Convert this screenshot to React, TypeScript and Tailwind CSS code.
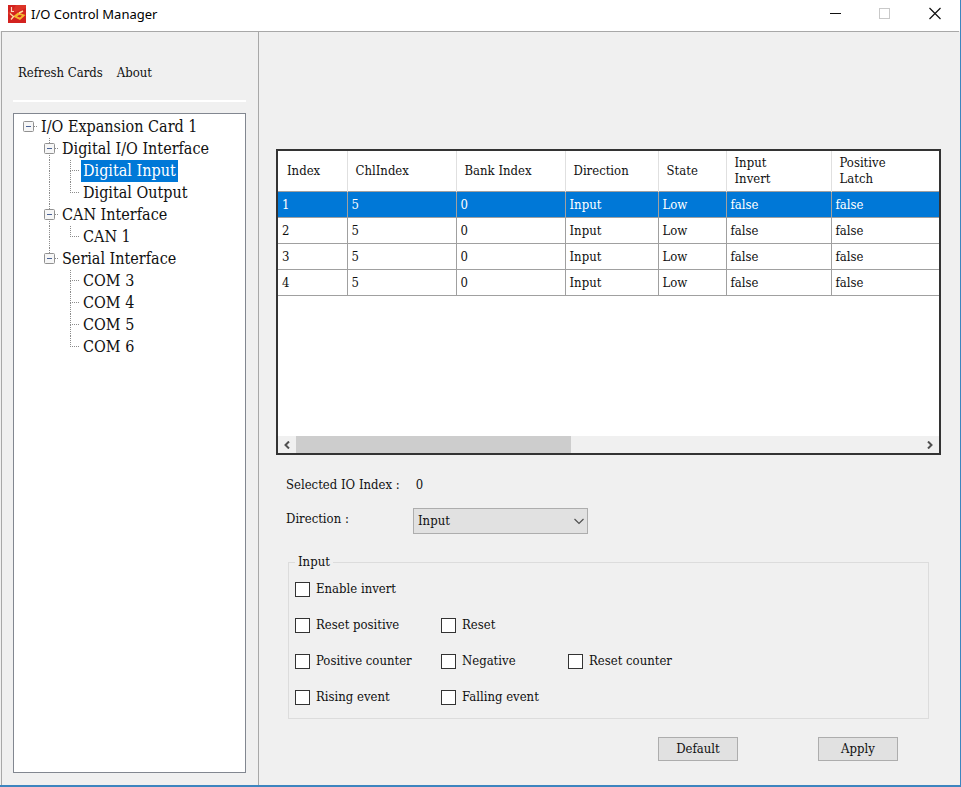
import React, { useState } from 'react';

type Guide = 'none' | 'line' | 'tee' | 'corner' | 'root' | 'node' | 'lastNode';

interface TreeItem {
    label: string;
    guides: Guide[];
}

const treeItems: TreeItem[] = [
    { label: 'I/O Expansion Card 1', guides: ['root'] },
    { label: 'Digital I/O Interface', guides: ['none', 'node'] },
    { label: 'Digital Input', guides: ['none', 'line', 'tee'] },
    { label: 'Digital Output', guides: ['none', 'line', 'corner'] },
    { label: 'CAN Interface', guides: ['none', 'node'] },
    { label: 'CAN 1', guides: ['none', 'line', 'corner'] },
    { label: 'Serial Interface', guides: ['none', 'lastNode'] },
    { label: 'COM 3', guides: ['none', 'none', 'tee'] },
    { label: 'COM 4', guides: ['none', 'none', 'tee'] },
    { label: 'COM 5', guides: ['none', 'none', 'tee'] },
    { label: 'COM 6', guides: ['none', 'none', 'corner'] },
];

const columns = [
    { title: 'Index', width: 'w-[69px]' },
    { title: 'ChlIndex', width: 'w-[109px]' },
    { title: 'Bank Index', width: 'w-[109px]' },
    { title: 'Direction', width: 'w-[93px]' },
    { title: 'State', width: 'w-[68px]' },
    { title: 'Input Invert', width: 'w-[105px]' },
    { title: 'Positive Latch', width: '' },
];

const rows = [
    ['1', '5', '0', 'Input', 'Low', 'false', 'false'],
    ['2', '5', '0', 'Input', 'Low', 'false', 'false'],
    ['3', '5', '0', 'Input', 'Low', 'false', 'false'],
    ['4', '5', '0', 'Input', 'Low', 'false', 'false'],
];

const options = [
    ['Enable invert'],
    ['Reset positive', 'Reset'],
    ['Positive counter', 'Negative', 'Reset counter'],
    ['Rising event', 'Falling event'],
];

const AppLogo = () => (
    <svg className="w-[18px] h-[18px]" viewBox="0 0 18 18" fill="none" aria-hidden="true">
        <rect width="18" height="18" fill="#d3221f" />
        <path d="M0 9L8 7L18 3V0H8L5 5L0 7Z" fill="#dc3427" />
        <path d="M3.500 2V6.500H6" stroke="#f8d9bd" strokeWidth="1.2" />
        <path d="M5 11.500L10 7.500L17.500 10L12 15Z" fill="#f4b62e" />
        <path d="M9 11.500L11 10L14 10.500L12 12.500Z" fill="#d3221f" />
        <path d="M2 8.500L5.500 11.500L3 14.500M11 8L15 6" stroke="#fbdc9c" strokeWidth="1.4" />
    </svg>
);

const TreeGuide: React.FC<{ type: Guide }> = ({ type }) => {
    const hasBox = type === 'root' || type === 'node' || type === 'lastNode';
    const goesDown = type === 'line' || type === 'tee' || type === 'node';
    const goesUp = goesDown || type === 'corner' || type === 'lastNode';

    return (
        <svg className="w-[21px] h-[22px] shrink-0" viewBox="0 0 21 22" fill="none" aria-hidden="true">
            <g stroke="#8c8c8c" strokeDasharray="1 1">
                {goesUp && <path d="M10.500 0V11" />}
                {goesDown && <path d="M10.500 11V22" />}
                {type !== 'none' && type !== 'line' && <path d="M10 10.500H19" />}
            </g>
            {hasBox && (
                <>
                    <rect x="5.500" y="5.500" width="10" height="10" rx="1" fill="#f6f6f6" stroke="#919191" />
                    <path d="M8 10.500H13" stroke="#4b6397" />
                </>
            )}
        </svg>
    );
};

const TitleBar = () => (
    <header className="flex h-[31px] items-start justify-between bg-white pl-2 pr-[17px] pt-1">
        <div className="flex items-center gap-[5px]">
            <AppLogo />
            <h1 className="font-['Noto_Sans',sans-serif] text-[13px] leading-5 text-black">I/O Control Manager</h1>
        </div>
        <div className="flex items-center gap-[33px]">
            <button aria-label="Minimize">
                <svg className="h-4 w-4" viewBox="0 0 16 16" stroke="#111"><path d="M1 9.500H12" /></svg>
            </button>
            <button aria-label="Maximize" disabled>
                <svg className="h-4 w-4" viewBox="0 0 16 16" fill="none" stroke="#c9c9c9"><rect x="1.500" y="4.500" width="10" height="10" /></svg>
            </button>
            <button aria-label="Close">
                <svg className="h-4 w-4" viewBox="0 0 16 16" stroke="#111" strokeWidth="1.2"><path d="M2.500 4L13.500 15M13.500 4L2.500 15" /></svg>
            </button>
        </div>
    </header>
);

const Sidebar = () => {
    const [selected, setSelected] = useState('Digital Input');

    return (
        <aside className="flex w-[257px] shrink-0 flex-col border-l border-[#a8a8a8] pb-3 pl-[11px] pr-3">
            <nav className="flex gap-[14px] border-b-2 border-white pb-[17px] pl-[5px] pt-[31px]">
                <button className="leading-5">Refresh Cards</button>
                <button className="leading-5">About</button>
            </nav>
            <ul className="mt-[11px] flex-1 border border-[#828790] bg-white pl-1 pt-[2px] text-[16px]">
                {treeItems.map((item) => (
                    <li key={item.label} className="flex h-[22px]">
                        {item.guides.map((guide, i) => <TreeGuide key={i} type={guide} />)}
                        <button
                            onClick={() => setSelected(item.label)}
                            className={`px-[2px] leading-[22px] whitespace-nowrap ${selected === item.label ? 'bg-[#0078d7] text-white' : ''}`}
                        >
                            {item.label}
                        </button>
                    </li>
                ))}
            </ul>
        </aside>
    );
};

const ChannelGrid = () => {
    const [selectedRow, setSelectedRow] = useState(0);

    return (
        <div className="mr-[18px] flex min-h-[240px] flex-1 flex-col justify-between overflow-hidden border-2 border-[#333] bg-white">
            <table className="w-full table-fixed border-collapse">
                <thead>
                    <tr className="h-10">
                        {columns.map((col) => (
                            <th key={col.title} className={`${col.width} border-r border-[#e0e0e0] pl-2 pr-8 pt-px text-left font-normal leading-4 whitespace-nowrap first:pl-[9px] last:border-r-0 nth-[6]:whitespace-normal nth-[7]:whitespace-normal`}>
                                {col.title}
                            </th>
                        ))}
                    </tr>
                </thead>
                <tbody>
                    {rows.map((row, r) => (
                        <tr key={r} onClick={() => setSelectedRow(r)} className={`h-[26px] ${selectedRow === r ? 'bg-[#0078d7] text-white' : ''}`}>
                            {row.map((cell, c) => (
                                <td key={c} className="border border-[#a0a0a0] pl-1 pt-px leading-5 first:border-l-0 last:border-r-0">{cell}</td>
                            ))}
                        </tr>
                    ))}
                </tbody>
            </table>
            <div className="flex h-[17px] bg-[#f0f0f0]">
                <button aria-label="Scroll left" className="flex w-[18px] items-center justify-center">
                    <svg className="h-2 w-2" viewBox="0 0 8 8" fill="none" stroke="#505050" strokeWidth="2"><path d="M6 0.500L2.500 4L6 7.500" /></svg>
                </button>
                <div className="flex-1"><div className="h-full w-[44%] bg-[#cdcdcd]" /></div>
                <button aria-label="Scroll right" className="flex w-[18px] items-center justify-center">
                    <svg className="h-2 w-2" viewBox="0 0 8 8" fill="none" stroke="#505050" strokeWidth="2"><path d="M2 0.500L5.500 4L2 7.500" /></svg>
                </button>
            </div>
        </div>
    );
};

const InputOptions = () => (
    <fieldset className="ml-3 mr-[30px] mt-[19px] h-[166px] border border-[#dcdcdc] px-[6px]">
        <legend className="px-[3px] leading-[18px]">Input</legend>
        <div className="flex flex-col gap-4 pt-2">
            {options.map((line) => (
                <div key={line[0]} className="grid grid-cols-[146px_127px_1fr]">
                    {line.map((name) => (
                        <label key={name} className="flex items-center gap-[6px] leading-5 whitespace-nowrap">
                            <input type="checkbox" className="h-[15px] w-[15px] appearance-none border border-[#333] bg-white checked:bg-[#0078d7]" />
                            {name}
                        </label>
                    ))}
                </div>
            ))}
        </div>
    </fieldset>
);

const buttonClasses = "h-6 w-20 border border-[#adadad] bg-[#e1e1e1] leading-5 hover:bg-[#e5f1fb]";

const App: React.FC = () => (
    <div className="flex min-h-screen flex-col border-b-2 border-r border-[#3d85bf] bg-[#f0f0f0] font-['DejaVu_Serif_Condensed','DejaVu_Serif',serif] text-[13px] text-[#111]">
        <TitleBar />
        <div className="mx-px flex flex-1 border-t border-[#a8a8a8]">
            <Sidebar />
            <main className="flex flex-1 flex-col border-l border-[#a8a8a8] pb-6 pl-[17px] pt-[117px]">
                <ChannelGrid />
                <div className="flex gap-4 pl-[10px] pt-5 leading-5">
                    <span>Selected IO Index :</span>
                    <output>0</output>
                </div>
                <div className="mt-[13px] flex items-start pl-[10px]">
                    <label htmlFor="direction" className="w-[127px] pt-px leading-5">Direction :</label>
                    <div className="relative">
                        <select id="direction" className="h-[26px] w-[175px] appearance-none border border-[#adadad] bg-[#e1e1e1] pl-1">
                            <option>Input</option>
                            <option>Output</option>
                        </select>
                        <svg className="pointer-events-none absolute right-1 top-2 h-[10px] w-[10px]" viewBox="0 0 10 10" fill="none" stroke="#505050" strokeWidth="1.2"><path d="M0.500 3L5 7.500L9.500 3" /></svg>
                    </div>
                </div>
                <InputOptions />
                <div className="mr-[61px] mt-[18px] flex justify-end gap-20">
                    <button className={buttonClasses}>Default</button>
                    <button className={buttonClasses}>Apply</button>
                </div>
            </main>
        </div>
    </div>
);

export default App;
